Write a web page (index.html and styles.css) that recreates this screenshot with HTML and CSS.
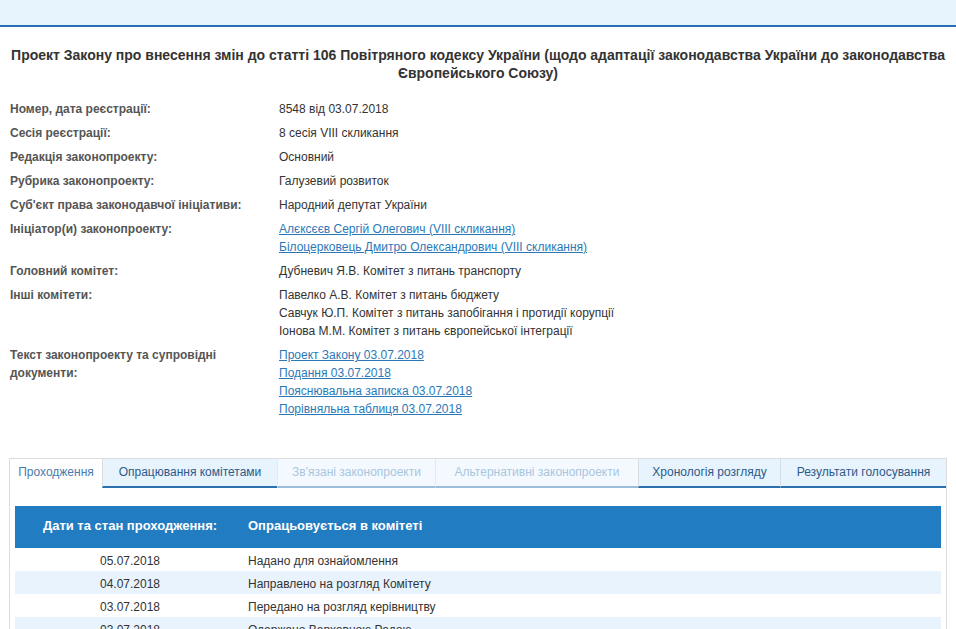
FILE: index.html
```html
<!DOCTYPE html>
<html>
<head>
    <meta charset="utf-8">
    <title>Картка законопроекту</title>
    <link rel="stylesheet" href="styles.css">
</head>
<body>
    <div class="topbar"></div>

    <h3 class="title">Проект Закону про внесення змін до статті 106 Повітряного кодексу України (щодо адаптації законодавства України до законодавства Європейського Союзу)</h3>

    <div class="info">
        <div class="lbl">Номер, дата реєстрації:</div>
        <div class="val">8548 від 03.07.2018</div>

        <div class="lbl">Сесія реєстрації:</div>
        <div class="val">8 сесія VIII скликання</div>

        <div class="lbl">Редакція законопроекту:</div>
        <div class="val">Основний</div>

        <div class="lbl">Рубрика законопроекту:</div>
        <div class="val">Галузевий розвиток</div>

        <div class="lbl">Суб'єкт права законодавчої ініціативи:</div>
        <div class="val">Народний депутат України</div>

        <div class="lbl">Ініціатор(и) законопроекту:</div>
        <div class="val">
            <a href="#">Алєксєєв Сергій Олегович (VIII скликання)</a><br>
            <a href="#">Білоцерковець Дмитро Олександрович (VIII скликання)</a>
        </div>

        <div class="lbl">Головний комітет:</div>
        <div class="val">Дубневич Я.В. Комітет з питань транспорту</div>

        <div class="lbl">Інші комітети:</div>
        <div class="val">
            Павелко А.В. Комітет з питань бюджету<br>
            Савчук Ю.П. Комітет з питань запобігання і протидії корупції<br>
            Іонова М.М. Комітет з питань європейської інтеграції
        </div>

        <div class="lbl">Текст законопроекту та супровідні<br>документи:</div>
        <div class="val">
            <a href="#">Проект Закону 03.07.2018</a><br>
            <a href="#">Подання 03.07.2018</a><br>
            <a href="#">Пояснювальна записка 03.07.2018</a><br>
            <a href="#">Порівняльна таблиця 03.07.2018</a>
        </div>
    </div>

    <div class="tabbox">
        <div class="tabs">
            <div class="tab current">Проходження</div>
            <div class="tab">Опрацювання комітетами</div>
            <div class="tab off">Зв'язані законопроекти</div>
            <div class="tab off">Альтернативні законопроекти</div>
            <div class="tab">Хронологія розгляду</div>
            <div class="tab">Результати голосування</div>
        </div>

        <table class="stages">
            <tr class="head">
                <th class="c1">Дати та стан проходження:</th>
                <th class="c2">Опрацьовується в комітеті</th>
            </tr>
            <tr><td class="c1">05.07.2018</td><td class="c2">Надано для ознайомлення</td></tr>
            <tr class="alt"><td class="c1">04.07.2018</td><td class="c2">Направлено на розгляд Комітету</td></tr>
            <tr><td class="c1">03.07.2018</td><td class="c2">Передано на розгляд керівництву</td></tr>
            <tr class="alt"><td class="c1">03.07.2018</td><td class="c2">Одержано Верховною Радою</td></tr>
        </table>
    </div>
</body>
</html>
```

FILE: styles.css
```css
body {
    margin: 0;
    font-family: "Liberation Sans", Arial, sans-serif;
    font-size: 12px;
    color: #333;
    background: white;
}

.topbar {
    height: 25px;
    background-color: #e6f2fc;
    border-bottom: 2px solid #2a6fb0;
}

.title {
    margin: 19px 0 0 0;
    padding: 0 10px;
    text-align: center;
    font-size: 14px;
    line-height: 18px;
    font-weight: bold;
    color: #333;
}

.info {
    display: grid;
    grid-template-columns: 269px 1fr;
    row-gap: 6px;
    margin-top: 18px;
    padding-left: 10px;
    line-height: 18px;
}

.lbl {
    font-weight: bold;
    color: #555;
}

.val a {
    color: #2b78b8;
}

.tabbox {
    margin: 40px 9px 0 9px;
    border: 1px solid #ddd;
    border-bottom: none;
    padding-bottom: 10px;
}

.tabs {
    display: grid;
    grid-template-columns: 92px 175px 158px 203px 142px 1fr;
}

.tab {
    height: 27px;
    line-height: 26px;
    text-align: center;
    background-color: #e7f3fd;
    color: #2d5a8a;
    border-left: 1px solid #d8dde2;
    border-bottom: 2px solid #2a6fb0;
    white-space: nowrap;
}

.tab.current {
    background: white;
    color: #4a7bab;
    border-left: none;
    border-bottom: 2px solid white;
}

.tab.off {
    background-color: #f3f9fe;
    color: #a9c6df;
    border-left-color: #e3e9ee;
    border-bottom-color: #9dbcd7;
}

.stages {
    width: calc(100% - 10px);
    margin: 18px 5px 0 5px;
    border-collapse: collapse;
}

.stages th {
    height: 42px;
    box-sizing: border-box;
    background-color: #217cc2;
    color: white;
    font-size: 13px;
    font-weight: bold;
    padding: 0 0 3px 0;
}

.stages td {
    height: 23px;
    padding: 3px 0 0 0;
    box-sizing: border-box;
    color: #333;
}

.stages .c1 {
    width: 230px;
    text-align: center;
}

.stages .c2 {
    text-align: left;
    padding-left: 3px;
}

.stages tr.alt td {
    background-color: #e8f3fd;
}
```
